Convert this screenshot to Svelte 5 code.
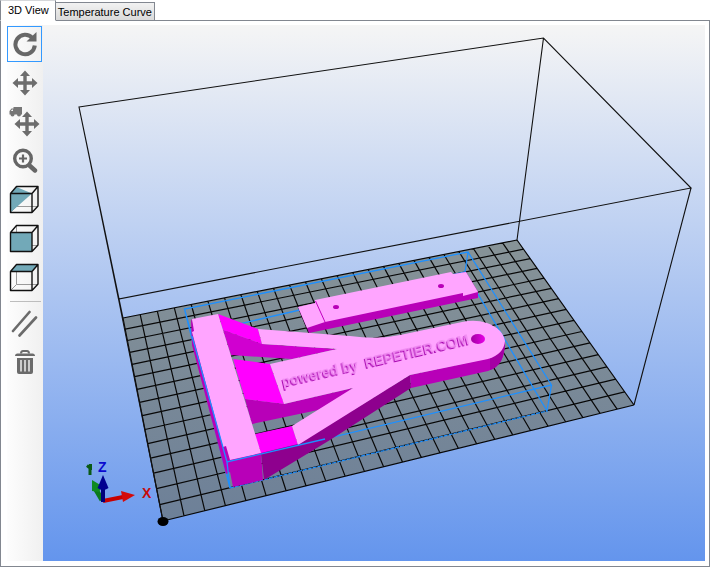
<script>
  const corners = { fl: [163, 521], fr: [634, 405], br: [517, 240], bl: [123, 318] };
  const cols = 25;
  const rows = 15;

  // perspective mapping of the unit square onto the print bed
  function project(u, v) {
    const { fl, fr, br, bl } = corners;
    const dx1 = fr[0] - br[0];
    const dx2 = bl[0] - br[0];
    const sx = fl[0] - fr[0] + br[0] - bl[0];
    const dy1 = fr[1] - br[1];
    const dy2 = bl[1] - br[1];
    const sy = fl[1] - fr[1] + br[1] - bl[1];
    const det = dx1 * dy2 - dx2 * dy1;
    const g = (sx * dy2 - dx2 * sy) / det;
    const h = (dx1 * sy - sx * dy1) / det;
    const w = 1 + g * u + h * v;
    const at = (i) =>
      (fl[i] + (fr[i] - fl[i] + g * fr[i]) * u + (bl[i] - fl[i] + h * bl[i]) * v) / w;
    return `${at(0).toFixed(1)} ${at(1).toFixed(1)}`;
  }

  let grid = '';
  for (let i = 0; i <= cols; i++) grid += `M${project(i / cols, 0)}L${project(i / cols, 1)}`;
  for (let j = 0; j <= rows; j++) grid += `M${project(0, j / rows)}L${project(1, j / rows)}`;

  const arrows =
    'M12 -.500l5 5.500h-3.300v5.300H19V7l5.500 5-5.500 5v-3.300h-5.300V19H17l-5 5.500-5-5.500h3.300v-5.300H5V17L-.500 12 5 7v3.300h5.300V5H7z';

  const tabs = [
    { id: 'view', label: '3D View' },
    { id: 'temp', label: 'Temperature Curve' },
  ];

  let tab = $state('view');
  let mode = $state('rotate');
</script>

<main>
  <div class="tabs" role="tablist">
    {#each tabs as t}
      <button class="tab" class:active={tab === t.id} role="tab" aria-selected={tab === t.id} onclick={() => (tab = t.id)}>{t.label}</button>
    {/each}
  </div>
  <section class="panel">
    <div class="toolbar" role="toolbar" aria-label="View tools">
      <button class="tool" class:selected={mode === 'rotate'} aria-label="Rotate" onclick={() => (mode = 'rotate')}>
        <svg width="26" height="26" viewBox="0 0 26 26">
          <path d="M20.500 7.200A9.700 9.700 0 1 0 22.800 14.500" fill="none" stroke="#676767" stroke-width="4" />
          <path d="M24.500 1v9.500H14.500z" fill="#676767" />
        </svg>
      </button>
      <button class="tool" class:selected={mode === 'move'} aria-label="Move" onclick={() => (mode = 'move')}>
        <svg width="26" height="26" viewBox="-1 -1 26 26"><path d={arrows} fill="#6d6d6d" /></svg>
      </button>
      <button class="tool" class:selected={mode === 'object'} aria-label="Move object" onclick={() => (mode = 'object')}>
        <svg width="32" height="32" viewBox="0 0 32 32">
          <path d={arrows} fill="#6d6d6d" transform="translate(6 6)" />
          <path d="M4.500 1H13v7.500h-1a2 2 0 0 1-4 0H5.500a2 2 0 0 1-4 0H.5V5L2.500 2.500h2z" fill="#777" />
          <path d="M1.800 5 3 3.500h1V5z" fill="#f4f4f4" />
        </svg>
      </button>
      <button class="tool" class:selected={mode === 'zoom'} aria-label="Zoom" onclick={() => (mode = 'zoom')}>
        <svg width="26" height="26" viewBox="0 0 26 26">
          <circle cx="11" cy="10.500" r="8.300" fill="none" stroke="#666" stroke-width="3.400" />
          <path d="M17.500 17.500l5.500 5" stroke="#666" stroke-width="4.400" stroke-linecap="round" />
          <path d="M11 6.500v8M7 10.500h8" stroke="#666" stroke-width="2.200" />
        </svg>
      </button>
      {#each ['diagonal', 'front', 'top'] as side}
        <button class="tool" class:selected={mode === side} aria-label={`${side} view`} onclick={() => (mode = side)}>
          <svg width="31" height="30" viewBox="0 0 31 30">
            <path d="M7.500 1.500v20M7.500 21.500h21M7.500 21.500l-6 6" stroke="#999" fill="none" />
            {#if side === 'front'}
              <path d="M1.500 8.500h21.500v19H1.500z" fill="#72a9b8" />
            {:else if side === 'top'}
              <path d="M7.500 1.500h21.500L23 8.500H1.500z" fill="#72a9b8" />
            {:else}
              <path d="M7.500 2 23 8.500 1.500 27.500v-19z" fill="#72a9b8" />
            {/if}
            <path d="M1.500 8.500H23v19H1.500zM1.500 8.500l6-7H29V21L23 27.500M23 8.500l6-7" stroke="#111" stroke-width="1.400" fill="none" stroke-linejoin="round" />
          </svg>
        </button>
      {/each}
      <hr />
      <button class="tool" class:selected={mode === 'parallel'} aria-label="Parallel projection" onclick={() => (mode = 'parallel')}>
        <svg width="28" height="28" viewBox="0 0 28 28">
          <path d="M2 22 18.500 3M8.500 26.500 25 8.500" stroke="#6b6b6b" stroke-width="2.600" stroke-linecap="round" />
        </svg>
      </button>
      <button class="tool" aria-label="Delete">
        <svg width="22" height="26" viewBox="0 0 22 26">
          <path d="M7 4.500q0-2.500 2-2.500h4q2 0 2 2.500" fill="none" stroke="#6b6b6b" stroke-width="2" />
          <path d="M1 7q0-2.500 2.500-2.500h15Q21 4.500 21 7z" fill="#6b6b6b" />
          <path d="M3 9h16v14q0 2-2 2H5q-2 0-2-2z" fill="#6b6b6b" />
          <path d="M7 11v11.500M11 11v11.500M15 11v11.500" stroke="#eee" stroke-width="1.500" />
        </svg>
      </button>
    </div>
    <div class="viewport">
      <svg viewBox="43 25 662 536" role="img" aria-label="3D print bed preview">
        <defs>
          <linearGradient id="bed" x1="0" y1="240" x2="0" y2="521" gradientUnits="userSpaceOnUse">
            <stop stop-color="#879397" />
            <stop offset="1" stop-color="#6d8098" />
          </linearGradient>
          <linearGradient id="bore">
            <stop stop-color="#a000a0" />
            <stop offset="1" stop-color="#e800e8" />
          </linearGradient>
        </defs>

        <!-- print bed and build volume -->
        <path d="M163 521 634 405 517 240 123 318z" fill="url(#bed)" />
        <path d={grid} fill="none" stroke="#080808" stroke-width="1.200" />
        <path d="M79 107 543.500 38 691 188 118.500 299zM543.500 38 517 240M79 107 123 318M118.500 299 163 521M691 188 634 405" fill="none" stroke="#111" stroke-width="1.100" />
        <ellipse cx="163" cy="521.500" rx="5.500" ry="4.500" />

        <!-- selection box, rear edges -->
        <path d="M227 462 184.500 309 468 252 551.500 385 228 462M468 252 465 272 547 411 551.500 385M184.500 309 191 335 230 488M191 335 465 272" fill="none" stroke="#1e90ff" stroke-width="1.300" />
        <path d="M230 488 547 411" fill="none" stroke="#1e90ff" stroke-width="1.200" stroke-dasharray="4 1" />

        <!-- clamp bar -->
        <path d="M298 307 309 333 478 298V292L466 272z" fill="#b800b8" />
        <path d="M298 307 315 303V300L451 272 453 274 466 272 478 292 463 296V293L325 322 307 328z" fill="#ffa5ff" />
        <path d="M315.500 301 325 322" stroke="#c000c0" fill="none" />
        <ellipse cx="336" cy="307" rx="3" ry="2" fill="#b800b8" />
        <ellipse cx="441" cy="286" rx="3" ry="2" fill="#b800b8" />

        <!-- cross bar sides -->
        <path d="M191 319 192 345 226 474 230 472 233 487 263 480 261 453z" fill="#b800b8" />
        <!-- upper arm -->
        <path d="M223 330 262 344 337 349 292 359 231 355z" fill="#d000d0" />
        <path d="M218 314 258 329 262 344 223 330z" fill="#f0f" />
        <!-- underside of the middle arm -->
        <path d="M245 399 284 404 353 388 340 398 323 409 252 424z" fill="#b800b8" />
        <path d="M233 359 270 364 284 404 245 399z" fill="#f0f" />
        <!-- lower arm -->
        <path d="M255 434 292 426 298 445 261 454z" fill="#f0f" />
        <path d="M261 453 298 444 410 375 411 388 330 440 264 480z" fill="#8e008e" />
        <!-- head edge -->
        <path d="M410 375 490 358 505 341Q505 353 501 361 497 368 488 371L411 388z" fill="#b800b8" />
        <path d="M490 358Q502 353 505 341 505 353 501 361 497 368 490 370z" fill="#a400a4" />
        <!-- top faces -->
        <path d="M258 329 350 336Q378 340 400 335L462 322Q475 319 487 323 503 329 505 341 504 354 488 359L410 375 298 445 292 426 353 388 284 404 270 364 337 349 262 344z" fill="#ffa5ff" />
        <path d="M192 319 218 314 261 453 230 460 226 446 223 447 192 332 194 331z" fill="#ffa5ff" />
        <ellipse cx="478" cy="339" rx="7" ry="5" fill="url(#bore)" />
        <g class="emboss" transform="translate(283 387) rotate(-13)">
          <text x="0" y="0">powered by</text>
          <text x="85" y="0">REPETIER.COM</text>
        </g>

        <!-- selection box edges over the model -->
        <path d="M192 336 227 462 325 439M227 462 230 488" fill="none" stroke="#1e90ff" stroke-width="1.300" />

        <!-- axes -->
        <path d="M102 500 95 488" stroke="#0a7a1c" stroke-width="5" />
        <path d="M92 480 102 486 99 492 92 491z" fill="#0f8a20" />
        <path d="M103 501 123 497" stroke="#c80000" stroke-width="4" />
        <path d="M121 491 135 495 123 502z" fill="#d40a0a" />
        <path d="M103 502V486" stroke="#00007c" stroke-width="4" />
        <path d="M97.500 488 103 475 108.500 488Q103 492 97.500 488z" fill="#000090" />
        <text class="axis x" x="142" y="498">X</text>
        <text class="axis z" x="98" y="472">Z</text>
        <path d="M87 465.500 90 468V475M90.500 470V464" fill="none" stroke="#0a5a14" stroke-width="3" />
      </svg>
    </div>
  </section>
</main>

<style>
  :global(body) {
    margin: 0;
    background: #fff;
  }
  main {
    font: 11px/16px "Liberation Sans", Arial, sans-serif;
    color: #000;
  }
  .tabs {
    display: flex;
    align-items: flex-end;
    height: 21px;
    margin-bottom: -1px;
  }
  .tab {
    box-sizing: border-box;
    height: 19px;
    margin: 0;
    padding: 0 2px;
    border: 1px solid #828790;
    border-left: 0;
    background: linear-gradient(#f2f2f2, #dadada);
    font: inherit;
    color: inherit;
    white-space: nowrap;
  }
  .tab.active {
    height: 21px;
    padding: 0 6px 2px 7px;
    border-left: 1px solid #828790;
    border-top-color: #d5d7da;
    border-bottom-color: #fff;
    background: #fff;
    position: relative;
  }
  .panel {
    display: flex;
    border: 1px solid #828790;
    padding: 4px 4px 5px 6px;
  }
  .toolbar {
    display: flex;
    flex: none;
    flex-direction: column;
    gap: 3px;
    width: 36px;
    padding-top: 1px;
    box-sizing: border-box;
    background: linear-gradient(90deg, #fdfdfd, #f0f0f0);
  }
  .tool {
    display: flex;
    align-items: center;
    justify-content: center;
    box-sizing: border-box;
    width: 35px;
    height: 36px;
    margin: 0;
    padding: 0;
    border: 1px solid transparent;
    background: none;
  }
  .tool svg {
    flex: none;
  }
  .tool.selected {
    border-color: #3399ff;
  }
  hr {
    align-self: center;
    width: 31px;
    height: 1px;
    margin: 2px 0 0;
    border: 0;
    background: #bdbdbd;
  }
  .viewport {
    flex: 1;
    min-width: 0;
    background: linear-gradient(#f5f5f5, #6495ed);
  }
  .viewport svg {
    display: block;
    width: 100%;
    height: auto;
  }
  .emboss {
    font: bold 14px "Liberation Sans", Arial, sans-serif;
    fill: #f08cf2;
    filter: drop-shadow(-1px 1px 0 #a808b0);
  }
  .axis {
    font: bold 14px "Liberation Sans", Arial, sans-serif;
  }
  .x {
    fill: #c80a0a;
  }
  .z {
    fill: #0a0ad0;
  }
</style>
